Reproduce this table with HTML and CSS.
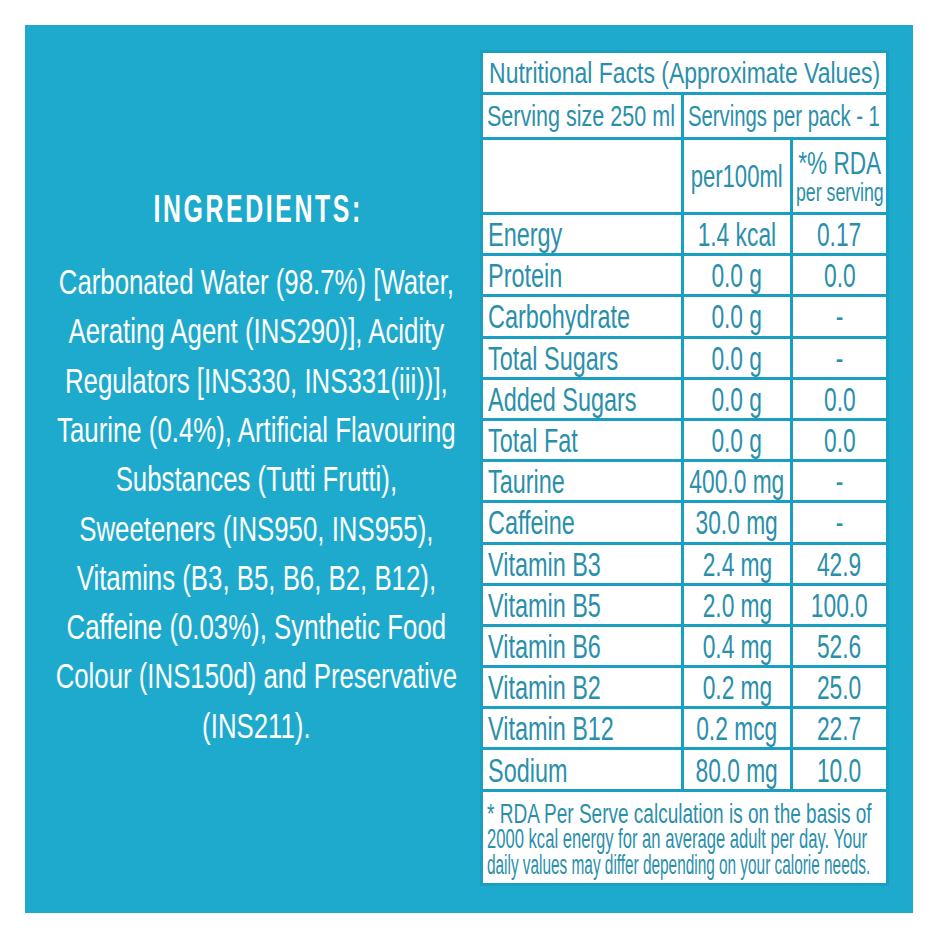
FILE: index.html
```html
<!DOCTYPE html>
<html lang="en">
<head>
<meta charset="utf-8">
<title>Ingredients and Nutritional Facts</title>
<link rel="stylesheet" href="styles.css">
</head>
<body>
<div class="panel">
  <section class="ingredients">
    <h2 class="ing-title"><span class="sx">INGREDIENTS:</span></h2>
    <p class="ing-text">Carbonated Water (98.7%) [Water,<br>Aerating Agent (INS290)], Acidity<br>Regulators [INS330, INS331(iii))],<br>Taurine (0.4%), Artificial Flavouring<br>Substances (Tutti Frutti),<br>Sweeteners (INS950, INS955),<br>Vitamins (B3, B5, B6, B2, B12),<br>Caffeine (0.03%), Synthetic Food<br>Colour (INS150d) and Preservative<br>(INS211).</p>
  </section>
  <section class="facts">
    <div class="cell title c"><span class="sx">Nutritional Facts (Approximate Values)</span></div>
    <div class="cell serving"><span class="sx">Serving size 250 ml</span></div>
    <div class="cell serving span2"><span class="sx">Servings per pack - 1</span></div>
    <div class="cell head"></div>
    <div class="cell head c"><span class="sx">per100ml</span></div>
    <div class="cell head c rda"><span class="sx rda-top">*% RDA</span><span class="sx rda-sub">per serving</span></div>

    <div class="cell row l"><span class="sx">Energy</span></div><div class="cell row c"><span class="sx">1.4 kcal</span></div><div class="cell row c"><span class="sx">0.17</span></div>
    <div class="cell row l"><span class="sx">Protein</span></div><div class="cell row c"><span class="sx">0.0 g</span></div><div class="cell row c"><span class="sx">0.0</span></div>
    <div class="cell row l"><span class="sx">Carbohydrate</span></div><div class="cell row c"><span class="sx">0.0 g</span></div><div class="cell row c"><span class="sx">-</span></div>
    <div class="cell row l"><span class="sx">Total Sugars</span></div><div class="cell row c"><span class="sx">0.0 g</span></div><div class="cell row c"><span class="sx">-</span></div>
    <div class="cell row l"><span class="sx">Added Sugars</span></div><div class="cell row c"><span class="sx">0.0 g</span></div><div class="cell row c"><span class="sx">0.0</span></div>
    <div class="cell row l"><span class="sx">Total Fat</span></div><div class="cell row c"><span class="sx">0.0 g</span></div><div class="cell row c"><span class="sx">0.0</span></div>
    <div class="cell row l"><span class="sx">Taurine</span></div><div class="cell row c"><span class="sx">400.0 mg</span></div><div class="cell row c"><span class="sx">-</span></div>
    <div class="cell row l"><span class="sx">Caffeine</span></div><div class="cell row c"><span class="sx">30.0 mg</span></div><div class="cell row c"><span class="sx">-</span></div>
    <div class="cell row l"><span class="sx">Vitamin B3</span></div><div class="cell row c"><span class="sx">2.4 mg</span></div><div class="cell row c"><span class="sx">42.9</span></div>
    <div class="cell row l"><span class="sx">Vitamin B5</span></div><div class="cell row c"><span class="sx">2.0 mg</span></div><div class="cell row c"><span class="sx">100.0</span></div>
    <div class="cell row l"><span class="sx">Vitamin B6</span></div><div class="cell row c"><span class="sx">0.4 mg</span></div><div class="cell row c"><span class="sx">52.6</span></div>
    <div class="cell row l"><span class="sx">Vitamin B2</span></div><div class="cell row c"><span class="sx">0.2 mg</span></div><div class="cell row c"><span class="sx">25.0</span></div>
    <div class="cell row l"><span class="sx">Vitamin B12</span></div><div class="cell row c"><span class="sx">0.2 mcg</span></div><div class="cell row c"><span class="sx">22.7</span></div>
    <div class="cell row l"><span class="sx">Sodium</span></div><div class="cell row c"><span class="sx">80.0 mg</span></div><div class="cell row c"><span class="sx">10.0</span></div>

    <div class="cell note"><span class="sx n1">* RDA Per Serve calculation is on the basis of</span><span class="sx n2">2000 kcal energy for an average adult per day. Your</span><span class="sx n3">daily values may differ depending on your calorie needs.</span></div>
  </section>
</div>
</body>
</html>
```
FILE: styles.css
```css
html, body {
  margin: 0;
  padding: 0;
  background: #ffffff;
}
body {
  width: 940px;
  height: 940px;
  font-family: "Liberation Sans", Arial, sans-serif;
}
.panel {
  box-sizing: border-box;
  margin: 25px 0 0 25px;
  width: 888px;
  height: 888px;
  background: #1eaacd;
  display: flex;
  padding: 25px 24px 27px 0;
}
.sx {
  display: inline-block;
  white-space: nowrap;
  transform-origin: center center;
}

/* Ingredients column */
.ingredients {
  flex: 1 1 0;
  min-width: 0;
  display: flex;
  flex-direction: column;
  justify-content: center;
  align-items: center;
  padding: 3px 0 0 8px;
  color: #ffffff;
  text-align: center;
}
.ing-title {
  margin: 0 0 28px 0;
  font-size: 38px;
  font-weight: bold;
  line-height: 40px;
  white-space: nowrap;
}
.ing-title .sx {
  letter-spacing: 4px;
  margin-right: -4px;
  transform: scaleX(0.654);
}
.ing-text {
  flex: none;
  margin: 0;
  font-size: 35px;
  line-height: 49.3px;
  white-space: nowrap;
  transform: scaleX(0.737);
  transform-origin: center center;
}

/* Nutrition table */
.facts {
  flex: none;
  box-sizing: border-box;
  width: 409px;
  padding: 3px;
  background: #1a9ec1;
  display: grid;
  grid-template-columns: 198px 106px 93px;
  grid-template-rows: 39px 42px 72px repeat(14, 38.2px) 91px;
  gap: 3px;
  color: #2a8fab;
  align-self: flex-start;
}
.cell {
  background: #ffffff;
  box-sizing: border-box;
  display: flex;
  align-items: center;
  white-space: nowrap;
  min-width: 0;
}
.c {
  justify-content: center;
}
.title {
  grid-column: 1 / 4;
  font-size: 30px;
}
.title .sx {
  transform: scaleX(0.765);
}
.serving {
  font-size: 30px;
  padding-left: 4px;
}
.serving .sx {
  transform-origin: left center;
  transform: scaleX(0.718);
}
.span2 .sx {
  transform: scaleX(0.677);
}
.span2 {
  grid-column: 2 / 4;
}
.head {
  font-size: 32px;
}
.head .sx {
  transform: scaleX(0.69);
}
.rda {
  flex-direction: column;
  justify-content: center;
  align-items: center;
  padding-top: 2px;
}
.head .rda-top {
  font-size: 32px;
  line-height: 29px;
  transform: scaleX(0.707);
}
.head .rda-sub {
  font-size: 25px;
  line-height: 28px;
  transform: scaleX(0.71);
}
.row {
  font-size: 33px;
  padding-top: 2px;
}
.row .sx {
  transform: scaleX(0.69);
}
.l {
  padding-left: 5px;
}
.l .sx {
  transform-origin: left center;
  transform: scaleX(0.71);
}
.note {
  grid-column: 1 / 4;
  flex-direction: column;
  align-items: flex-start;
  font-size: 27px;
  line-height: 25.8px;
  padding: 10px 4px 0 4px;
}
.note .sx {
  transform-origin: left center;
}
.note .n1 {
  transform: scaleX(0.704);
}
.note .n2 {
  transform: scaleX(0.615);
}
.note .n3 {
  transform: scaleX(0.569);
}
```
